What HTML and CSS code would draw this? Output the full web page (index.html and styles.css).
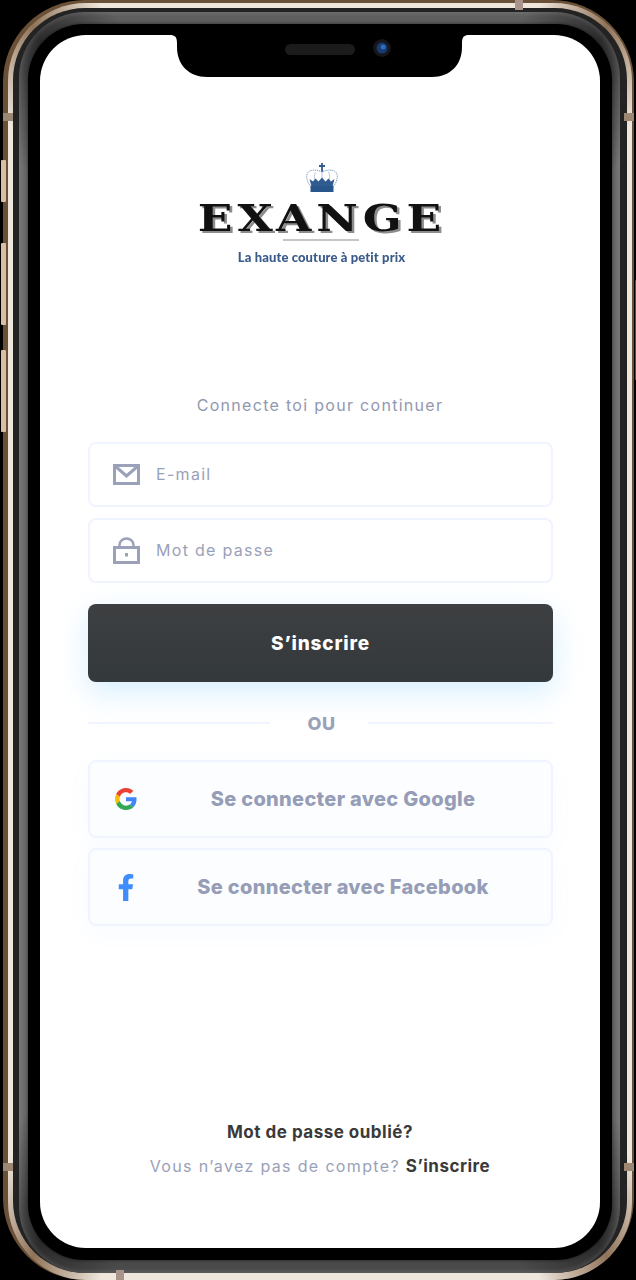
FILE: index.html
```html
<!DOCTYPE html>
<html lang="fr">
<head>
<meta charset="utf-8">
<title>Exange</title>
<link rel="stylesheet" href="styles.css">
</head>
<body>
<div class="device">
  <span class="key key-a"></span><span class="key key-b"></span><span class="key key-c"></span><span class="key key-r"></span>
  <div class="rim-brown"><div class="rim-light"><div class="rim-dark"><div class="rim-gray"><div class="rim-black">
    <main class="screen">
      <header class="logo">
        <svg class="crown" viewBox="0 0 32 29" aria-hidden="true">
          <path d="M16 0v9M13 3h6" stroke="#2f5b8f" stroke-width="1.800" fill="none"/>
          <path d="M16 9C10 6 1 6 .7 13c-.1 4 1.800 7 3.300 10h24c1.500-3 3.400-6 3.300-10C31 6 22 6 16 9z" fill="none" stroke="#7f9cc0" stroke-width="1" stroke-dasharray="1.300 .8"/>
          <path d="M16 9v9M9.500 9c-1.500 3-1.500 6 0 9M22.500 9c1.500 3 1.500 6 0 9" fill="none" stroke="#a9bdd6" stroke-width=".8"/>
          <path d="M3.500 16l3.500 2.500 2.500-3 3 3 3.500-4 3.500 4 3-3 2.500 3 3.500-2.500-2 7.500H5.500z" fill="#2f5b8f"/>
          <rect x="4.500" y="23" width="23" height="6" fill="#27568c"/>
        </svg>
        <div class="wordmark">EXANGE</div>
        <div class="rule"></div>
        <div class="tagline">La haute couture à petit prix</div>
      </header>

      <p class="subtitle">Connecte toi pour continuer</p>

      <section class="form">
        <label class="field">
          <svg class="field-icon" viewBox="0 0 27 21" aria-hidden="true">
            <rect x="1.500" y="1.500" width="24" height="18" fill="none" stroke="#9aa1b9" stroke-width="3"/>
            <path d="M2 2l11.500 10L25 2" fill="none" stroke="#9aa1b9" stroke-width="3"/>
          </svg>
          <span class="placeholder">E-mail</span>
        </label>
        <label class="field field-second">
          <svg class="field-icon lock" viewBox="0 0 27 27" aria-hidden="true">
            <rect x="1.500" y="10.500" width="24" height="15" fill="none" stroke="#9aa1b9" stroke-width="3"/>
            <path d="M6.500 10V8a7 6.500 0 0 1 14 0v2" fill="none" stroke="#9aa1b9" stroke-width="2.500"/>
            <rect x="12" y="16" width="3" height="3.500" fill="#9aa1b9"/>
          </svg>
          <span class="placeholder">Mot de passe</span>
        </label>

        <button class="primary" type="button">S’inscrire</button>

        <div class="divider"><span class="divider-line divider-left"></span><span class="divider-text">OU</span><span class="divider-line"></span></div>

        <button class="social" type="button">
          <svg class="google" viewBox="0 0 48 48" aria-hidden="true">
            <path fill="#EA4335" d="M24 9.500c3.540 0 6.710 1.220 9.210 3.600l6.850-6.850C35.900 2.380 30.470 0 24 0 14.620 0 6.510 5.380 2.560 13.220l7.980 6.190C12.430 13.720 17.740 9.500 24 9.500z"/>
            <path fill="#4285F4" d="M46.980 24.550c0-1.570-.15-3.090-.38-4.550H24v9.020h12.940c-.58 2.960-2.260 5.480-4.780 7.180l7.730 6c4.510-4.180 7.090-10.360 7.090-17.650z"/>
            <path fill="#FBBC05" d="M10.530 28.590c-.48-1.450-.76-2.990-.76-4.590s.27-3.140.76-4.590l-7.980-6.190C.92 16.460 0 20.120 0 24c0 3.880.92 7.540 2.560 10.780l7.970-6.190z"/>
            <path fill="#34A853" d="M24 48c6.480 0 11.930-2.130 15.890-5.810l-7.730-6c-2.150 1.450-4.920 2.300-8.160 2.300-6.260 0-11.570-4.220-13.470-9.910l-7.980 6.190C6.510 42.620 14.620 48 24 48z"/>
          </svg>
          <span class="social-text">Se connecter avec Google</span>
        </button>
        <button class="social social-second" type="button">
          <svg class="facebook" viewBox="0 0 320 512" aria-hidden="true">
            <path fill="#3f8cff" d="M279.140 288l14.220-92.660h-88.910v-60.130c0-25.350 12.420-50.060 52.240-50.060h40.420V6.260S260.430 0 225.360 0c-73.220 0-121.080 44.380-121.080 124.720v70.620H22.890V288h81.390v224h100.170V288z"/>
          </svg>
          <span class="social-text">Se connecter avec Facebook</span>
        </button>
      </section>

      <footer class="foot">
        <a class="forgot">Mot de passe oublié?</a>
        <p class="signup">Vous n’avez pas de compte? <b class="signup-link">S’inscrire</b></p>
      </footer>

      <svg class="notch" viewBox="0 0 299 42" aria-hidden="true">
        <path d="M0 0h299c-5 0-7 2-7 8v4c0 18-12 30-30 30H37C19 42 7 30 7 12V8C7 2 5 0 0 0z" fill="#000"/>
        <rect x="115" y="9" width="70" height="11" rx="5.500" fill="#1b1b1b"/>
        <circle cx="212" cy="13" r="9" fill="#16161a"/>
        <circle cx="212" cy="13" r="5.500" fill="#173a70"/>
        <circle cx="213" cy="12" r="2.500" fill="#2f6db8"/>
      </svg>
    </main>
  </div></div></div></div></div>
  <span class="band band-lt"></span><span class="band band-lb"></span><span class="band band-rt"></span><span class="band band-rb"></span>
  <span class="band-h band-top"></span><span class="band-h band-bottom"></span>
</div>
</body>
</html>
```

FILE: styles.css
```css
* { box-sizing: border-box; }
html, body { margin: 0; padding: 0; background: #000; }
body { font-family: Inter, "Noto Sans", sans-serif; }

.device { position: relative; width: 636px; height: 1280px; background: #000; overflow: hidden; padding-left: 3px; padding-right: 2px; }

.rim-brown { height: 1280px; border-radius: 82px; padding: 3px 2px 0 5px; background: #6b5038; }
.rim-light { height: 1277px; border-radius: 78px; padding: 5px 5px 7px 5px; background: conic-gradient(#efe6dc 0 19deg, #8f7359 25deg, #efe6dc 31deg 149deg, #8f7359 155deg, #efe6dc 161deg 199deg, #8f7359 205deg, #efe6dc 211deg 329deg, #8f7359 335deg, #efe6dc 341deg); }
.rim-dark { height: 1265px; border-radius: 72px; padding: 4px 7px 0 6px; background: #232323; }
.rim-gray { height: 1261px; border-radius: 66px; padding: 12px 8px 13px 9px; background: conic-gradient(#5e5e5e 0 18deg, #2c2c2c 25deg, #6a6a6a 32deg 148deg, #2c2c2c 155deg, #4a4a4a 162deg 198deg, #2c2c2c 205deg, #6a6a6a 212deg 328deg, #2c2c2c 335deg, #5e5e5e 342deg); box-shadow: inset 0 0 4px 2px rgba(255, 255, 255, .12); }
.rim-black { height: 1236px; border-radius: 56px; padding: 11px 12px 12px 12px; background: #000; box-shadow: 0 0 3px 1px rgba(0, 0, 0, .35); }

.screen { position: relative; height: 1213px; border-radius: 46px; background: #fff; display: flex; flex-direction: column; align-items: center; }

.notch { position: absolute; top: 0; left: 130px; width: 299px; height: 42px; }

.key { position: absolute; left: 1px; width: 5px; background: #d9bea6; border-radius: 1px; }
.key-a { top: 160px; height: 42px; }
.key-b { top: 243px; height: 82px; }
.key-c { top: 350px; height: 82px; }
.key-r { left: auto; right: 0; top: 280px; width: 1px; height: 100px; background: #5c4c3c; }

.band { position: absolute; width: 10px; height: 8px; background: #9c8674; }
.band-lt { left: 3px; top: 113px; }
.band-lb { left: 3px; top: 1163px; }
.band-rt { right: 2px; top: 113px; }
.band-rb { right: 2px; top: 1163px; }
.band-h { position: absolute; width: 8px; height: 10px; background: #a8948a; }
.band-top { left: 515px; top: 0; }
.band-bottom { left: 116px; bottom: 0; }

.logo { margin-top: 128px; display: flex; flex-direction: column; align-items: center; height: 103px; }
.crown { width: 32px; height: 29px; display: block; margin-left: 4px; filter: blur(.3px); }
.wordmark { margin-top: 8px; margin-left: 3px; font-family: "DejaVu Serif", serif; font-weight: 700; font-size: 37px; line-height: 36px; letter-spacing: 4px; color: #111; text-shadow: 2px 2px 0 #8d8d8d; transform: scaleX(1.230); filter: blur(.35px); }
.rule { margin-top: 3px; margin-left: 2px; width: 76px; height: 2px; background: #c3c5c9; }
.tagline { margin-top: 9px; margin-left: 3px; font-family: Lato, sans-serif; font-weight: 900; font-size: 13px; line-height: 14px; letter-spacing: .12px; color: #3a5b8a; filter: blur(.3px); }

.subtitle { margin: 127px 0 0; height: 24px; font-size: 16px; line-height: 24px; letter-spacing: 1.300px; color: #9298b0; font-weight: 400; }

.form { margin-top: 25px; width: 465px; margin-left: 1px; display: flex; flex-direction: column; }

.field { display: flex; align-items: center; height: 65px; padding-left: 23px; padding-bottom: 1px; border: 2px solid #f0f4ff; border-radius: 8px; background: #fff; }
.field-second { margin-top: 11px; }
.field-icon { width: 27px; height: 21px; flex: none; }
.field-icon.lock { height: 27px; }
.placeholder { margin-left: 16px; margin-top: -1px; font-size: 16px; letter-spacing: 1.300px; color: #9aa1b9; }

.primary { margin-top: 21px; height: 78px; border: 0; border-radius: 8px; background: linear-gradient(#3d3f41, #34393c); color: #fff; font: 800 19px/24px Inter, sans-serif; letter-spacing: .8px; box-shadow: 0 10px 30px rgba(64, 180, 255, .22); padding: 1px 0 0; }

.divider { margin-top: 30px; height: 24px; display: flex; align-items: center; }
.divider-line { flex: 1; height: 2px; background: #f0f4ff; margin-top: -2px; }
.divider-left { flex: none; width: 182px; }
.divider-text { width: 98px; padding-left: 5px; text-align: center; font-weight: 800; font-size: 18px; line-height: 24px; letter-spacing: .4px; color: #9aa1b9; }

.social { margin-top: 24px; height: 78px; display: flex; align-items: center; padding: 0 2px 0 25px; border: 2px solid #f0f4ff; border-radius: 8px; background: #fcfdff; box-shadow: 0 6px 24px rgba(64, 150, 255, .04); font-family: inherit; }
.social-second { margin-top: 10px; }
.google { width: 22px; height: 22px; flex: none; }
.facebook { width: 22px; height: 27px; flex: none; }
.social-text { flex: 1; text-align: center; font-weight: 800; font-size: 20px; line-height: 24px; letter-spacing: .3px; color: #969db7; }

.foot { margin-top: auto; padding-bottom: 70px; display: flex; flex-direction: column; align-items: center; }
.forgot { font-weight: 700; font-size: 17px; line-height: 24px; letter-spacing: .5px; color: #3a3a3a; }
.signup { margin: 10px 0 0; font-size: 16px; line-height: 24px; letter-spacing: 1.350px; color: #9aa1b9; }
.signup-link { font-size: 17px; font-weight: 700; letter-spacing: .5px; color: #3a3a3a; }
```
